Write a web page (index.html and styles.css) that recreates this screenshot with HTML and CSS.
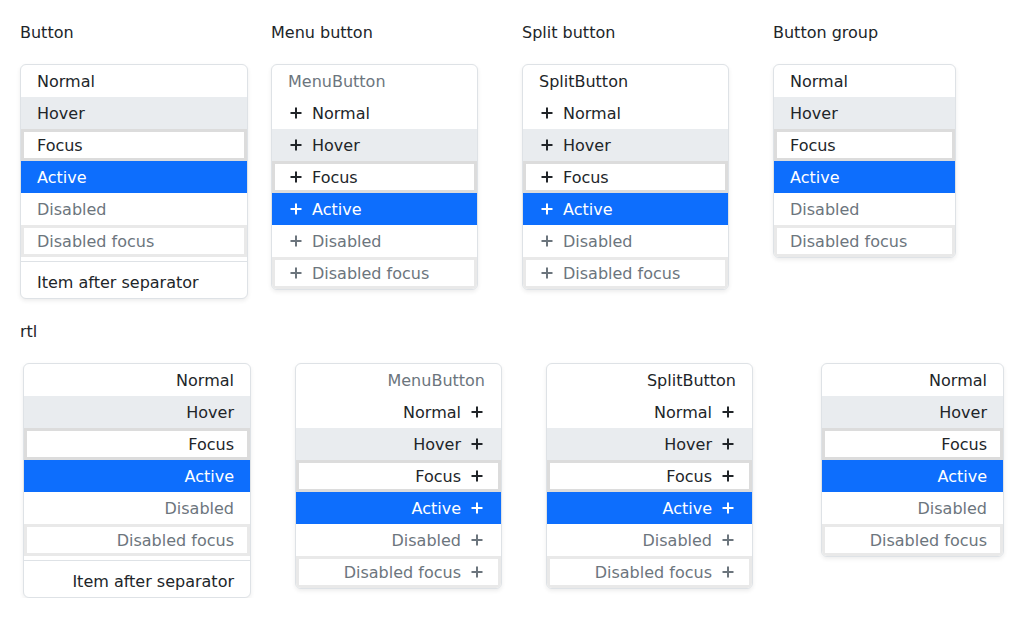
FILE: index.html
```html
<!DOCTYPE html>
<html lang="en">
<head>
<meta charset="utf-8">
<title>Menus</title>
<link rel="stylesheet" href="styles.css">
</head>
<body>
<svg width="0" height="0" class="defs" aria-hidden="true">
  <symbol id="plus" viewBox="0 0 16 16"><path d="M8 2.5v11M2.5 8h11" stroke="currentColor" stroke-width="2" fill="none"/></symbol>
</svg>

<section class="row">
  <div class="col">
    <div class="title">Button</div>
    <div class="menu">
      <div class="item">Normal</div>
      <div class="item hover">Hover</div>
      <div class="item focus">Focus</div>
      <div class="item active">Active</div>
      <div class="item disabled">Disabled</div>
      <div class="item disabled focus">Disabled focus</div>
      <div class="sep"></div>
      <div class="item">Item after separator</div>
    </div>
  </div>
  <div class="col">
    <div class="title">Menu button</div>
    <div class="menu">
      <div class="item header">MenuButton</div>
      <div class="item"><svg class="ic"><use href="#plus"/></svg>Normal</div>
      <div class="item hover"><svg class="ic"><use href="#plus"/></svg>Hover</div>
      <div class="item focus"><svg class="ic"><use href="#plus"/></svg>Focus</div>
      <div class="item active"><svg class="ic"><use href="#plus"/></svg>Active</div>
      <div class="item disabled"><svg class="ic"><use href="#plus"/></svg>Disabled</div>
      <div class="item disabled focus"><svg class="ic"><use href="#plus"/></svg>Disabled focus</div>
    </div>
  </div>
  <div class="col">
    <div class="title">Split button</div>
    <div class="menu">
      <div class="item">SplitButton</div>
      <div class="item"><svg class="ic"><use href="#plus"/></svg>Normal</div>
      <div class="item hover"><svg class="ic"><use href="#plus"/></svg>Hover</div>
      <div class="item focus"><svg class="ic"><use href="#plus"/></svg>Focus</div>
      <div class="item active"><svg class="ic"><use href="#plus"/></svg>Active</div>
      <div class="item disabled"><svg class="ic"><use href="#plus"/></svg>Disabled</div>
      <div class="item disabled focus"><svg class="ic"><use href="#plus"/></svg>Disabled focus</div>
    </div>
  </div>
  <div class="col">
    <div class="title">Button group</div>
    <div class="menu">
      <div class="item">Normal</div>
      <div class="item hover">Hover</div>
      <div class="item focus">Focus</div>
      <div class="item active">Active</div>
      <div class="item disabled">Disabled</div>
      <div class="item disabled focus">Disabled focus</div>
    </div>
  </div>
</section>

<div class="title rtl-title">rtl</div>
<section class="row rtl-row">
  <div class="col">
    <div class="menu" dir="rtl">
      <div class="item">Normal</div>
      <div class="item hover">Hover</div>
      <div class="item focus">Focus</div>
      <div class="item active">Active</div>
      <div class="item disabled">Disabled</div>
      <div class="item disabled focus">Disabled focus</div>
      <div class="sep"></div>
      <div class="item">Item after separator</div>
    </div>
  </div>
  <div class="col">
    <div class="menu" dir="rtl">
      <div class="item header">MenuButton</div>
      <div class="item"><svg class="ic"><use href="#plus"/></svg>Normal</div>
      <div class="item hover"><svg class="ic"><use href="#plus"/></svg>Hover</div>
      <div class="item focus"><svg class="ic"><use href="#plus"/></svg>Focus</div>
      <div class="item active"><svg class="ic"><use href="#plus"/></svg>Active</div>
      <div class="item disabled"><svg class="ic"><use href="#plus"/></svg>Disabled</div>
      <div class="item disabled focus"><svg class="ic"><use href="#plus"/></svg>Disabled focus</div>
    </div>
  </div>
  <div class="col">
    <div class="menu" dir="rtl">
      <div class="item">SplitButton</div>
      <div class="item"><svg class="ic"><use href="#plus"/></svg>Normal</div>
      <div class="item hover"><svg class="ic"><use href="#plus"/></svg>Hover</div>
      <div class="item focus"><svg class="ic"><use href="#plus"/></svg>Focus</div>
      <div class="item active"><svg class="ic"><use href="#plus"/></svg>Active</div>
      <div class="item disabled"><svg class="ic"><use href="#plus"/></svg>Disabled</div>
      <div class="item disabled focus"><svg class="ic"><use href="#plus"/></svg>Disabled focus</div>
    </div>
  </div>
  <div class="col">
    <div class="menu" dir="rtl">
      <div class="item">Normal</div>
      <div class="item hover">Hover</div>
      <div class="item focus">Focus</div>
      <div class="item active">Active</div>
      <div class="item disabled">Disabled</div>
      <div class="item disabled focus">Disabled focus</div>
    </div>
  </div>
</section>
</body>
</html>
```

FILE: styles.css
```css
html, body {
  margin: 0;
  background: #fff;
}
body {
  padding-top: 20px;
  font-family: "DejaVu Sans", sans-serif;
  font-size: 16px;
  line-height: 24px;
  color: #212529;
}
.defs {
  position: absolute;
  width: 0;
  height: 0;
}
.row {
  display: flex;
  align-items: flex-start;
  padding-left: 20px;
}
.col {
  width: 251px;
  flex: none;
  display: flex;
  flex-direction: column;
  align-items: flex-start;
}
.title {
  box-sizing: border-box;
  height: 24px;
  padding-top: 1px;
  margin-bottom: 20px;
}
.rtl-title {
  margin-top: 20px;
  padding-left: 20px;
}
.rtl-row {
  padding-left: 0;
  padding-right: 20px;
  justify-content: flex-end;
}
.rtl-row .col {
  align-items: flex-end;
}
.menu {
  width: fit-content;
  background: #fff;
  border: 1px solid #dee2e6;
  border-radius: 6px;
  box-shadow: 0 2px 4px rgba(0, 0, 0, 0.075);
  overflow: hidden;
}
.item {
  box-sizing: border-box;
  display: flex;
  align-items: center;
  gap: 8px;
  height: 32px;
  padding-top: 2px;
  padding-inline: 16px 48px;
  white-space: nowrap;
  color: #212529;
}
.item .ic {
  margin-top: -2px;
}
.item.header {
  color: #6c757d;
}
.item.hover {
  background: #e9ecef;
}
.item.focus {
  box-shadow: inset 0 0 0 3px #dcdcdc;
}
.item.active {
  background: #0d6efd;
  color: #fff;
}
.item.disabled {
  color: #6c757d;
}
.item.disabled.focus {
  box-shadow: inset 0 0 0 3px #e9e9e9;
}
.ic {
  width: 16px;
  height: 16px;
  flex: none;
}
.sep {
  margin: 4px 0;
  border-top: 1px solid #dee2e6;
}
```
